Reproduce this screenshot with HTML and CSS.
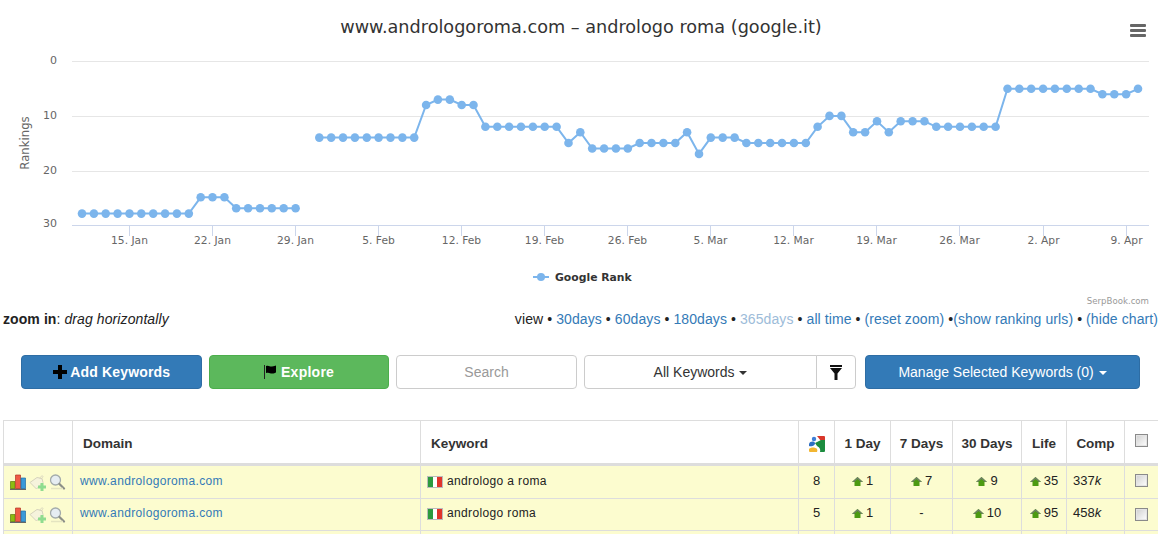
FILE: index.html
```html
<!DOCTYPE html>
<html lang="en">
<head>
  <meta charset="UTF-8">
  <title>SerpBook - www.andrologoroma.com</title>
  <link rel="stylesheet" href="styles.css">
</head>
<body>
  <svg id="chart" class="chart" width="1158" height="309" viewBox="0 0 1158 309"></svg>

  <div class="chart-links">
    <div><b>zoom in</b>: <i>drag horizontally</i></div>
    <div class="views">
      view &bull; <a href="#">30days</a> &bull; <a href="#">60days</a> &bull; <a href="#">180days</a> &bull;
      <a href="#" class="current">365days</a> &bull; <a href="#">all time</a> &bull; <a href="#">(reset zoom)</a>
      &bull;<a href="#">(show ranking urls)</a> &bull; <a href="#">(hide chart)</a>
    </div>
  </div>

  <div class="toolbar">
    <button class="btn btn-blue btn-add">
      <svg class="btn-icon" width="14" height="14" viewBox="0 0 14 14"><path d="M5 0h4v5h5v4H9v5H5V9H0V5h5z" fill="#000"/></svg>
      Add Keywords
    </button>
    <button class="btn btn-green btn-explore">
      <svg class="btn-icon" width="13" height="14" viewBox="0 0 13 14"><path d="M0 0h1v14H0z" fill="#222"/><path d="M2 1c3-1 4 1 6 .5s3-.5 4-1v7c-1 .5-2 1-4 1S5 7 2 8z" fill="#000"/></svg>
      Explore
    </button>
    <input class="search" type="text" placeholder="Search">
    <div class="filter-group">
      <button class="btn btn-white btn-filter-main">All Keywords <span class="caret"></span></button>
      <button class="btn btn-white btn-filter-icon">
        <svg width="12" height="15" viewBox="0 0 12 15"><path d="M0 0h12v2H0zM0 3h12L7.500 8.500V15h-3V8.500z" fill="#111"/></svg>
      </button>
    </div>
    <button class="btn btn-blue btn-manage">Manage Selected Keywords (0) <span class="caret"></span></button>
  </div>

  <table class="keywords">
    <colgroup>
      <col class="c-tools"><col class="c-domain"><col class="c-keyword"><col class="c-rank">
      <col class="c-day"><col class="c-week"><col class="c-month"><col class="c-life"><col class="c-comp"><col class="c-check">
    </colgroup>
    <thead>
      <tr>
        <th></th>
        <th class="left">Domain</th>
        <th class="left">Keyword</th>
        <th>
          <svg class="g-icon" width="16" height="16" viewBox="0 0 16 16">
            <path d="M8 0h7a1 1 0 0 1 1 1v3l-4 1z" fill="#d9372b"/>
            <path d="M6 7l6-3 4 0v11a1 1 0 0 1-1 1h-4c1-3-1-5-3-6z" fill="#1c8c3f"/>
            <circle cx="5" cy="3" r="2.200" fill="#3f7fd6"/>
            <path d="M0 8c1-3 5-3 6-1 .5 2-3 4-6 3z" fill="#2e6fc4"/>
            <path d="M0 15v-2c2-2 6-2 8 0 .5 1 .5 2 0 3H1a1 1 0 0 1-1-1z" fill="#f2b632"/>
          </svg>
        </th>
        <th>1 Day</th>
        <th>7 Days</th>
        <th>30 Days</th>
        <th>Life</th>
        <th>Comp</th>
        <th class="check-cell"><input class="check" type="checkbox"></th>
      </tr>
    </thead>
    <tbody>
      <tr>
        <td class="tools">
          <svg width="16" height="16" viewBox="0 0 16 16"><use href="#i-bars"/></svg><svg width="18" height="17" viewBox="0 0 18 17"><use href="#i-tag"/></svg><svg width="17" height="16" viewBox="0 0 17 16"><use href="#i-glass"/></svg>
        </td>
        <td class="left"><a href="#">www.andrologoroma.com</a></td>
        <td class="left kw"><span class="flag"><i></i><i></i><i></i></span>andrologo a roma</td>
        <td>8</td>
        <td><svg class="up" width="11" height="9" viewBox="0 0 11 9"><use href="#i-up"/></svg>1</td>
        <td><svg class="up" width="11" height="9" viewBox="0 0 11 9"><use href="#i-up"/></svg>7</td>
        <td><svg class="up" width="11" height="9" viewBox="0 0 11 9"><use href="#i-up"/></svg>9</td>
        <td><svg class="up" width="11" height="9" viewBox="0 0 11 9"><use href="#i-up"/></svg>35</td>
        <td class="comp">337<i>k</i></td>
        <td class="check-cell"><input class="check" type="checkbox"></td>
      </tr>
      <tr>
        <td class="tools">
          <svg width="16" height="16" viewBox="0 0 16 16"><use href="#i-bars"/></svg><svg width="18" height="17" viewBox="0 0 18 17"><use href="#i-tag"/></svg><svg width="17" height="16" viewBox="0 0 17 16"><use href="#i-glass"/></svg>
        </td>
        <td class="left"><a href="#">www.andrologoroma.com</a></td>
        <td class="left kw"><span class="flag"><i></i><i></i><i></i></span>andrologo roma</td>
        <td>5</td>
        <td><svg class="up" width="11" height="9" viewBox="0 0 11 9"><use href="#i-up"/></svg>1</td>
        <td>-</td>
        <td><svg class="up" width="11" height="9" viewBox="0 0 11 9"><use href="#i-up"/></svg>10</td>
        <td><svg class="up" width="11" height="9" viewBox="0 0 11 9"><use href="#i-up"/></svg>95</td>
        <td class="comp">458<i>k</i></td>
        <td class="check-cell"><input class="check" type="checkbox"></td>
      </tr>
      <tr class="blank">
        <td></td><td></td><td></td><td></td><td></td><td></td><td></td><td></td><td></td><td></td>
      </tr>
    </tbody>
  </table>

  <svg class="sprites" width="0" height="0">
    <symbol id="i-bars" viewBox="0 0 16 16">
      <path d="M0 14.500h16V16H0z" fill="#666"/>
      <path d="M.5 7.500h4.500v7H.5z" fill="#8dbb12" stroke="#5d7d0a" stroke-width=".7"/>
      <path d="M5.500 1h5v13.500h-5z" fill="#ee5a45" stroke="#b33524" stroke-width=".7"/>
      <path d="M11 4h4.500v10.500H11z" fill="#3a9ad9" stroke="#1f6ea6" stroke-width=".7"/>
    </symbol>
    <symbol id="i-tag" viewBox="0 0 18 17">
      <path d="M1 8.500l7-5 5 1 1 4-6.500 6.500z" fill="#f6f3dc" stroke="#d6d3bd"/>
      <path d="M11 5c0-3 3-4 3-2.500s-2 1-1 3" fill="none" stroke="#d6d3bd" stroke-width=".8"/>
      <path d="M11.500 9h3v2.500H17v3h-2.500V17h-3v-2.500H9v-3h2.500z" fill="#8fdc8f"/>
    </symbol>
    <symbol id="i-glass" viewBox="0 0 17 16">
      <circle cx="6.500" cy="6" r="5" fill="#e6edf2" stroke="#a3abab" stroke-width="1.300"/>
      <path d="M10.500 10l4.500 4.500" stroke="#8c8f88" stroke-width="2.200" stroke-linecap="round"/>
      <path d="M2 14.500h12" stroke="#e4e4c0" stroke-width="1.500"/>
    </symbol>
    <symbol id="i-up" viewBox="0 0 11 9">
      <path d="M5.500 0L11 5H8.500v4h-6V5H0z" fill="#4c9a12"/>
      <path d="M5.500 0L11 5H9L5.500 2 2 5H0z" fill="#6f7f68"/>
    </symbol>
  </svg>

  <script src="chart.js"></script>
</body>
</html>
```

FILE: styles.css
```css
* {
  box-sizing: border-box;
}
html, body {
  height: 534px;
  overflow: hidden;
}
body {
  margin: 0;
  font-family: "Liberation Sans", Arial, sans-serif;
  font-size: 14px;
  line-height: 20px;
  color: #333;
  background: #fff;
}
a {
  color: #337ab7;
  text-decoration: none;
}
.chart {
  display: block;
}
.chart text {
  font-family: "DejaVu Sans", Verdana, sans-serif;
}
.chart-links {
  display: flex;
  justify-content: space-between;
  padding-left: 3px;
  color: #222;
  letter-spacing: 0.09px;
}
.views {
  white-space: nowrap;
}
.views .current {
  color: #9dbcd9;
}
.toolbar {
  display: flex;
  margin-top: 26px;
  padding-left: 21px;
  height: 34px;
}
.btn {
  height: 34px;
  border: 1px solid transparent;
  border-radius: 4px;
  padding: 0;
  font-family: inherit;
  font-size: 14px;
  cursor: pointer;
}
.btn-blue {
  background: #337ab7;
  border-color: #2e6da4;
  color: #fff;
}
.btn-green {
  background: #5cb85c;
  border-color: #4cae4c;
  color: #fff;
}
.btn-white {
  background: #fff;
  border-color: #ccc;
  color: #333;
}
.btn-add {
  width: 181px;
  font-weight: bold;
  letter-spacing: 0.15px;
}
.btn-explore {
  width: 180px;
  margin-left: 7px;
  font-weight: bold;
  letter-spacing: 0.25px;
}
.btn-icon {
  vertical-align: -2px;
}
.search {
  width: 181px;
  margin-left: 7px;
  border: 1px solid #ccc;
  border-radius: 4px;
  font-family: inherit;
  font-size: 14px;
  text-align: center;
}
.search::placeholder {
  color: #999;
}
.filter-group {
  display: flex;
  width: 272px;
  margin-left: 7px;
}
.btn-filter-main {
  width: 233px;
  border-radius: 4px 0 0 4px;
}
.btn-filter-icon {
  width: 40px;
  margin-left: -1px;
  border-radius: 0 4px 4px 0;
}
.btn-filter-icon svg {
  vertical-align: middle;
}
.btn-manage {
  width: 275px;
  margin-left: 9px;
}
.caret {
  display: inline-block;
  width: 0;
  height: 0;
  margin-left: 1px;
  vertical-align: middle;
  border-top: 4px solid;
  border-left: 4px solid transparent;
  border-right: 4px solid transparent;
}
.keywords {
  margin: 31px 0 0 3px;
  width: 1160px;
  table-layout: fixed;
  border-collapse: collapse;
  font-size: 13px;
}
.c-tools { width: 69px; }
.c-domain { width: 348px; }
.c-keyword { width: 378px; }
.c-rank { width: 36px; }
.c-day { width: 56px; }
.c-week { width: 62px; }
.c-month { width: 69px; }
.c-life { width: 45px; }
.c-comp { width: 58px; }
.c-check { width: 39px; }
.keywords th,
.keywords td {
  border: 1px solid #ddd;
  padding: 0 4px;
  text-align: center;
  white-space: nowrap;
}
.keywords th {
  height: 44px;
  padding-top: 4px;
  border-bottom: 3px solid #ddd;
  font-size: 13.500px;
  color: #333;
}
.keywords td {
  height: 32px;
  padding-bottom: 2px;
  background: #fcfccf;
  color: #222;
}
.keywords tbody tr:first-child td {
  height: 34px;
}
.keywords tbody tr + tr td {
  padding-bottom: 3px;
}
.keywords th.left {
  text-align: left;
  padding-left: 10px;
}
.keywords td.left {
  text-align: left;
  padding-left: 7px;
  font-size: 12px;
  letter-spacing: 0.36px;
}
.keywords td.kw {
  padding-left: 6px;
}
.keywords td.tools {
  padding: 0 0 0 6px;
  text-align: left;
  font-size: 0;
}
.tools svg {
  margin-right: 3px;
  vertical-align: middle;
}
.tools svg + svg {
  margin-right: 2px;
}
.g-icon {
  vertical-align: -4px;
}
.flag {
  display: inline-flex;
  width: 16px;
  height: 12px;
  margin-right: 4px;
  border: 1px solid #bbb;
  vertical-align: -2px;
}
.flag i {
  flex: 1;
  background: #fff;
}
.flag i:first-child {
  background: #2d9a3f;
}
.flag i:last-child {
  background: #e0352b;
}
.up {
  margin-right: 3px;
  vertical-align: -1px;
}
.keywords td.comp {
  text-align: left;
  padding-left: 6px;
}
.keywords .check-cell {
  padding: 0 0 3px 10px;
  text-align: left;
}
.keywords tbody tr + tr .check-cell {
  padding-bottom: 1px;
}
.check {
  appearance: none;
  display: block;
  width: 13px;
  height: 13px;
  margin: 0;
  border: 1px solid #8a8a8a;
  background: linear-gradient(135deg, #cfcfcf, #fff);
  box-shadow: inset 0 0 0 1px #e4e4e4;
}
.sprites {
  position: absolute;
}
```

FILE: chart.js
```js
// rank per day, null = no data that day
const ranks = [
  28, 28, 28, 28, 28, 28, 28, 28, 28, 28, 25, 25, 25, 27, 27, 27, 27, 27, 27, null,
  14, 14, 14, 14, 14, 14, 14, 14, 14, 8, 7, 7, 8, 8,
  12, 12, 12, 12, 12, 12, 12, 15, 13, 16, 16, 16, 16, 15, 15, 15, 15, 13, 17,
  14, 14, 14, 15, 15, 15, 15, 15, 15, 12, 10, 10, 13, 13, 11, 13, 11, 11, 11,
  12, 12, 12, 12, 12, 12, 5, 5, 5, 5, 5, 5, 5, 5, 6, 6, 6, 5
];
const ticks = [
  [129.5, "15. Jan"], [212.5, "22. Jan"], [295.5, "29. Jan"], [378.5, "5. Feb"],
  [461.5, "12. Feb"], [544.5, "19. Feb"], [627.5, "26. Feb"], [710.5, "5. Mar"],
  [793.5, "12. Mar"], [876.5, "19. Mar"], [959.5, "26. Mar"], [1043.5, "2. Apr"], [1126.5, "9. Apr"]
];
const color = "#7cb5ec";
const px = i => 82 + i * 11.865;
const py = r => 61.6 + r * 5.43;

let svg = "";
svg += `<text x="581" y="33" text-anchor="middle" font-size="17.670" fill="#333">www.andrologoroma.com – andrologo roma (google.it)</text>`;

// hamburger menu
[25, 30, 35].forEach(y => {
  svg += `<rect x="1130" y="${y - 1}" width="16" height="3" rx="1" fill="#666"/>`;
});

// grid and y labels
[[61.5, "0", 64], [116.5, "10", 119], [171.5, "20", 174]].forEach(([y, label, ty]) => {
  svg += `<path d="M72 ${y}H1149" stroke="#e6e6e6"/>`;
  svg += `<text x="57" y="${ty}" text-anchor="end" font-size="11" fill="#666">${label}</text>`;
});
svg += `<text x="57" y="227" text-anchor="end" font-size="11" fill="#666">30</text>`;
svg += `<path d="M72 225.500H1149" stroke="#ccd6eb"/>`;
svg += `<text transform="translate(29 143) rotate(-90)" text-anchor="middle" font-size="11.700" fill="#666">Rankings</text>`;

ticks.forEach(([x, label]) => {
  svg += `<path d="M${x} 226V236" stroke="#ccd6eb"/>`;
  svg += `<text x="${x}" y="244" text-anchor="middle" font-size="10.700" fill="#666">${label}</text>`;
});

// series line, broken at the gaps
let line = "";
let pen = "M";
ranks.forEach((r, i) => {
  if (r === null) {
    pen = "M";
    return;
  }
  line += `${pen}${px(i).toFixed(1)} ${py(r).toFixed(1)}`;
  pen = "L";
});
svg += `<path d="${line}" fill="none" stroke="${color}" stroke-width="2"/>`;
ranks.forEach((r, i) => {
  if (r !== null) {
    svg += `<circle cx="${px(i).toFixed(1)}" cy="${py(r).toFixed(1)}" r="4.300" fill="${color}"/>`;
  }
});

// legend and credit
svg += `<path d="M533 277H549" stroke="${color}" stroke-width="2"/><circle cx="541" cy="277" r="4" fill="${color}"/>`;
svg += `<text x="555" y="281" font-size="10.800" font-weight="bold" fill="#333">Google Rank</text>`;
svg += `<text x="1149" y="304" text-anchor="end" font-size="8.600" fill="#999">SerpBook.com</text>`;

document.getElementById("chart").innerHTML = svg;
```
